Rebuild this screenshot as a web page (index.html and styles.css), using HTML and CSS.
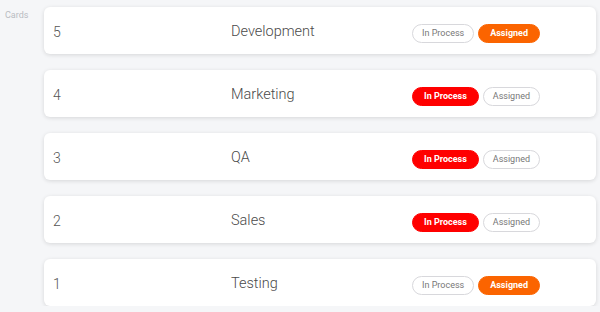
FILE: index.html
```html
<!DOCTYPE html>
<html lang="en">
<head>
    <meta charset="UTF-8">
    <meta name="viewport" content="width=device-width, initial-scale=1.0">
    <title>Cards</title>
    <link rel="stylesheet" href="styles.css">
</head>
<body>
    <div class="board">
        <div class="label">Cards</div>
        <div class="cards">
            <div class="card">
                <div class="num">5</div>
                <div class="name">Development</div>
                <div class="status">
                    <span class="pill">In Process</span>
                    <span class="pill assigned">Assigned</span>
                </div>
            </div>
            <div class="card">
                <div class="num">4</div>
                <div class="name">Marketing</div>
                <div class="status">
                    <span class="pill process">In Process</span>
                    <span class="pill">Assigned</span>
                </div>
            </div>
            <div class="card">
                <div class="num">3</div>
                <div class="name">QA</div>
                <div class="status">
                    <span class="pill process">In Process</span>
                    <span class="pill">Assigned</span>
                </div>
            </div>
            <div class="card">
                <div class="num">2</div>
                <div class="name">Sales</div>
                <div class="status">
                    <span class="pill process">In Process</span>
                    <span class="pill">Assigned</span>
                </div>
            </div>
            <div class="card">
                <div class="num">1</div>
                <div class="name">Testing</div>
                <div class="status">
                    <span class="pill">In Process</span>
                    <span class="pill assigned">Assigned</span>
                </div>
            </div>
        </div>
    </div>
</body>
</html>
```

FILE: styles.css
```css
body {
    font-family: Roboto, "Liberation Sans", sans-serif;
    background-color: #f5f6f8;
    margin: 0;
    padding: 7px 4px 0 5px;
}
.board {
    display: flex;
}
.label {
    width: 39px;
    font-size: 9px;
    color: #b9bcc2;
    padding-top: 3px;
}
.cards {
    flex: 1;
    display: flex;
    flex-direction: column;
    gap: 16px;
}
.card {
    box-sizing: border-box;
    display: grid;
    grid-template-columns: repeat(3, 1fr);
    align-items: center;
    height: 47px;
    padding: 2px 9px 0;
    background-color: #fff;
    border-radius: 6px;
    box-shadow: 0 1px 4px rgba(0, 0, 0, 0.13);
}
.num {
    font-size: 14px;
    font-weight: 300;
    color: #555;
}
.name {
    font-size: 14.5px;
    font-weight: 300;
    color: #4a4a4a;
}
.status {
    display: flex;
    gap: 4px;
    padding: 4px 0 0 3px;
}
.pill {
    box-sizing: border-box;
    height: 19px;
    line-height: 17px;
    padding: 0 9px;
    font-size: 9px;
    color: #777;
    border: 1px solid #d8d8dc;
    border-radius: 10px;
    background-color: #fff;
}
.pill.process {
    background-color: #ff0000;
    border-color: #ff0000;
    color: #fff;
    font-weight: 700;
    padding: 0 11px;
}
.pill.assigned {
    background-color: #fb6400;
    border-color: #fb6400;
    color: #fff;
    font-weight: 700;
    padding: 0 11px;
}
```
